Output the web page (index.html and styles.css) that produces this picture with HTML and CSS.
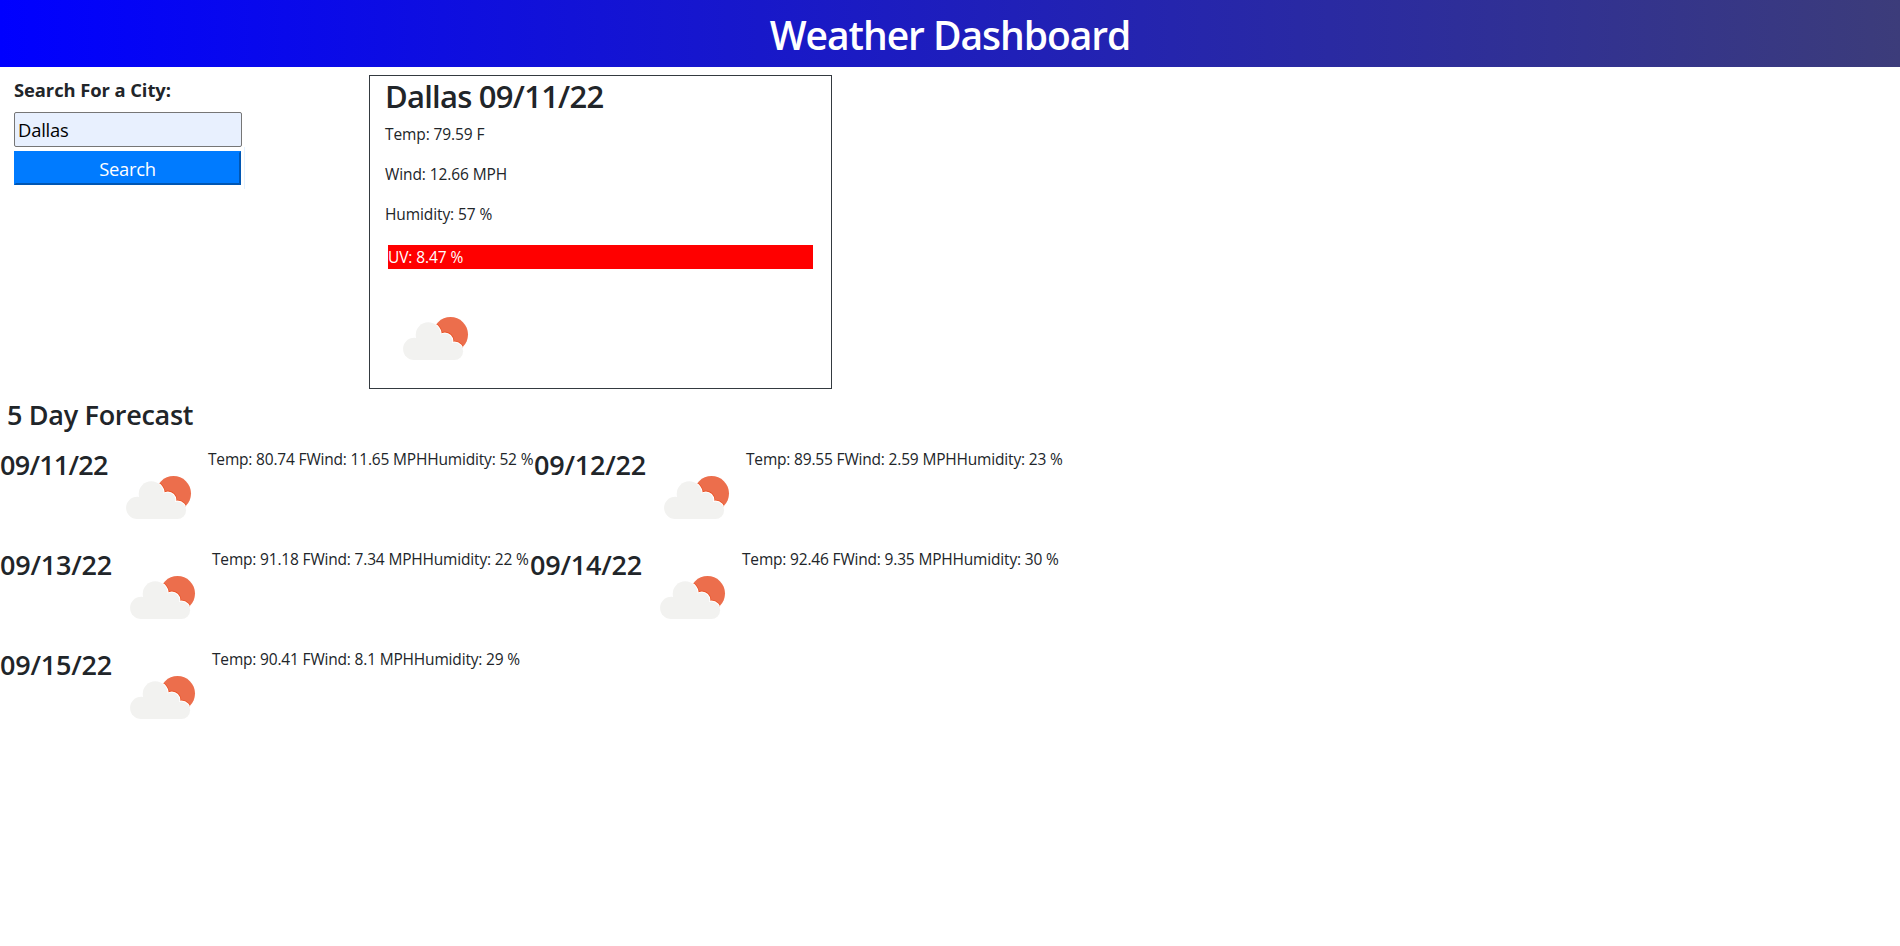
FILE: index.html
```html
<!DOCTYPE html>
<html lang="en">
<head>
<meta charset="utf-8">
<title>Weather Dashboard</title>
<link rel="stylesheet" href="styles.css">
</head>
<body>
<svg class="defs" width="0" height="0" aria-hidden="true">
  <defs>
    <clipPath id="sun-clip"><circle cx="65.5" cy="45.5" r="17.5"/></clipPath>
    <g id="cloud">
      <circle cx="43.2" cy="45.8" r="12.5"/>
      <circle cx="29.2" cy="59.9" r="11.1"/>
      <circle cx="59.8" cy="52" r="7.6"/>
      <circle cx="69.4" cy="62.3" r="8.7"/>
      <rect x="29" y="52" width="31" height="19"/>
      <rect x="59" y="58" width="10" height="13"/>
    </g>
    <symbol id="partly-cloudy" viewBox="0 0 100 100">
      <circle cx="65.5" cy="45.5" r="17.5" fill="#ec6e4c"/>
      <g clip-path="url(#sun-clip)">
        <use href="#cloud" fill="#ea5529" stroke="#ea5529" stroke-width="3.6"/>
        <use href="#cloud" fill="#fff" stroke="#fff" stroke-width="2"/>
      </g>
      <use href="#cloud" fill="#f2f2f0"/>
    </symbol>
  </defs>
</svg>
<header class="header"><h1 class="title">Weather Dashboard</h1></header>
<main>
  <div class="top">
    <form class="search">
      <label class="label" for="city"><span>Search For a City:</span></label>
      <input class="city" id="city" type="text" value="Dallas">
      <div class="action"><button class="submit" type="button">Search</button></div>
    </form>
    <section class="current">
      <h2 class="place">Dallas 09/11/22</h2>
      <p class="stat">Temp: 79.59 F</p>
      <p class="stat">Wind: 12.66 MPH</p>
      <p class="stat">Humidity: 57 %</p>
      <p class="uv">UV: 8.47 %</p>
      <svg class="icon"><use href="#partly-cloudy"/></svg>
    </section>
  </div>
  <h3 class="heading">5 Day Forecast</h3>
  <div class="row">
    <h3 class="date date-narrow">09/11/22</h3><svg class="icon"><use href="#partly-cloudy"/></svg><p class="stats stats-wide">Temp: 80.74 FWind: 11.65 MPHHumidity: 52 %</p>
    <h3 class="date">09/12/22</h3><svg class="icon"><use href="#partly-cloudy"/></svg><p class="stats">Temp: 89.55 FWind: 2.59 MPHHumidity: 23 %</p>
  </div>
  <div class="row">
    <h3 class="date">09/13/22</h3><svg class="icon"><use href="#partly-cloudy"/></svg><p class="stats">Temp: 91.18 FWind: 7.34 MPHHumidity: 22 %</p>
    <h3 class="date">09/14/22</h3><svg class="icon"><use href="#partly-cloudy"/></svg><p class="stats">Temp: 92.46 FWind: 9.35 MPHHumidity: 30 %</p>
  </div>
  <div class="row">
    <h3 class="date">09/15/22</h3><svg class="icon"><use href="#partly-cloudy"/></svg><p class="stats">Temp: 90.41 FWind: 8.1 MPHHumidity: 29 %</p>
  </div>
</main>
</body>
</html>
```
FILE: styles.css
```css
* { box-sizing: border-box; }
body {
  margin: 0;
  background: #fff;
  color: #212529;
  font-family: "Open Sans", "Noto Sans", sans-serif;
  font-size: 15.5px;
  line-height: 24px;
}
h1, h2, h3, p { margin: 0; font-weight: 600; white-space: nowrap; }
p { font-weight: 400; }
.defs { display: block; height: 0; }
.header {
  height: 67px;
  padding-top: 11px;
  background: linear-gradient(to right, #00f, #3c3c7a);
  text-align: center;
}
.title { color: #fff; font-size: 39px; line-height: 48px; letter-spacing: -1.05px; }
.top { display: flex; height: 322px; padding-top: 8px; }
.search {
  display: flex;
  flex-direction: column;
  align-items: flex-start;
  width: 369px;
  padding: 1px 0 0 14px;
}
.label { height: 36px; font-size: 18.4px; font-weight: 700; line-height: 28px; letter-spacing: -0.08px; }
.city {
  width: 228px;
  height: 35px;
  margin: 0;
  padding: 1px 3px;
  border: 1px solid #767676;
  border-radius: 2px;
  background: #e8f0fe;
  color: #000;
  font: 18.4px "Open Sans", sans-serif;
  letter-spacing: -0.2px;
}
.action {
  width: 231px;
  height: 42px;
  padding-top: 4px;
  border-right: 1px solid #e3f1ff;
}
.submit {
  display: block;
  width: 227px;
  height: 34px;
  padding: 0;
  border: 2px solid #0056b3;
  border-top-color: #007bff;
  border-left-color: #007bff;
  background: #007bff;
  color: #fff;
  font: 18.4px "Open Sans", sans-serif;
  letter-spacing: -0.3px;
}
.current {
  width: 463px;
  height: 314px;
  padding: 1px 15px 0;
  border: 1px solid #343a40;
}
.place { height: 45px; font-size: 31px; line-height: 38px; letter-spacing: -0.75px; }
.stat { height: 40px; letter-spacing: -0.1px; }
.uv { height: 24px; margin: 3px 3px 20px 3px; background: #f00; color: #fff; letter-spacing: -0.1px; }
.icon { display: block; flex: none; width: 100px; height: 100px; }
.heading { height: 59px; padding: 9px 0 0 7px; font-size: 27px; line-height: 34px; letter-spacing: -0.3px; }
.row { display: flex; height: 100px; }
.date { flex: none; width: 112px; font-size: 27px; line-height: 34px; letter-spacing: -0.2px; }
.date-narrow { width: 108px; letter-spacing: -0.75px; }
.stats { flex: none; width: 318px; margin-top: -1px; letter-spacing: -0.18px; }
.stats-wide { width: 326px; }
```
